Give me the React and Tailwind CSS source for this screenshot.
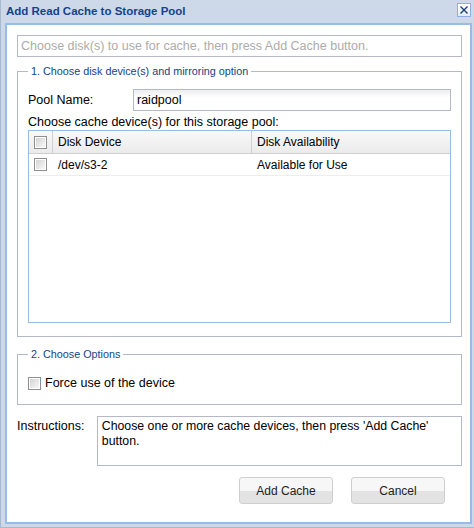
function Check() {
  return (
    <span className="w-[13px] h-[13px] border border-[#8e8f8f] bg-white p-[1px] flex shrink-0">
      <span className="flex-1 bg-linear-to-br from-[#d4d4d4] to-[#f7f7f7]" />
    </span>
  );
}

export default function App() {
  return (
    <div className="w-[474px] h-[528px] flex flex-col bg-[#cdd9e8] border-l border-b border-[#a9b9cd] pl-[4px] pr-[2px] pb-[3px] font-['Liberation_Sans',Arial,sans-serif] text-black">
      <div className="h-[23px] w-full flex items-start justify-between pl-[1px] pr-[1px]">
        <span className="text-[11.5px] font-bold text-[#15428b] leading-[23px]">Add Read Cache to Storage Pool</span>
        <span className="shrink-0 mt-[3px] w-[14px] h-[14px] border border-[#8fb0de] bg-linear-to-b from-[#ffffff] to-[#e3ecf7] flex items-center justify-center">
          <svg width="10" height="10" viewBox="0 0 10 10">
            <path d="M1.5 1.5 L8.5 8.5 M8.5 1.5 L1.5 8.5" stroke="#1c3f7a" strokeWidth="1.4" fill="none" />
          </svg>
        </span>
      </div>
      <div className="flex-1 bg-white border-2 border-[#99bbe8] pl-[10px] pr-[8px] pt-[10px] flex flex-col">
        <div className="h-[22px] border border-[#b5b8c8] px-[3px] flex items-center text-[12.5px] text-[#acacac]">
          Choose disk(s) to use for cache, then press Add Cache button.
        </div>

        <fieldset className="mt-[8px] border border-[#b5b8c8] pl-[10px] pr-[10px] pt-[11px] pb-[13px]">
          <legend className="px-[3px] text-[10.8px] leading-[13px] text-[#15428b]">1. Choose disk device(s) and mirroring option</legend>
          <div className="flex items-center h-[22px]">
            <span className="w-[105px] text-[12.5px]">Pool Name:</span>
            <span className="w-[318px] h-[22px] border border-[#b5b8c8] bg-linear-to-b from-[#eeeeee] to-[#ffffff] to-40% flex items-center px-[3px] text-[12.5px]">raidpool</span>
          </div>
          <div className="mt-[4px] text-[12.5px] leading-[15px]">Choose cache device(s) for this storage pool:</div>
          <div className="h-[193px] border border-[#99bbe8] flex flex-col">
            <div className="h-[23px] flex bg-linear-to-b from-[#f9f9f9] to-[#ebebeb] border-b border-[#d0d0d0] text-[12px]">
              <div className="w-[24px] border-r border-[#d0d0d0] flex items-center justify-center pr-[1px]"><Check /></div>
              <div className="w-[199px] border-r border-[#d0d0d0] flex items-center pl-[5px]">Disk Device</div>
              <div className="flex-1 flex items-center pl-[5px]">Disk Availability</div>
            </div>
            <div className="h-[22px] flex border-b border-[#ededed] text-[12px]">
              <div className="w-[24px] flex items-center justify-center pr-[1px]"><Check /></div>
              <div className="w-[199px] flex items-center pl-[5px]">/dev/s3-2</div>
              <div className="flex-1 flex items-center pl-[5px]">Available for Use</div>
            </div>
          </div>
        </fieldset>

        <fieldset className="mt-[11px] border border-[#b5b8c8] pl-[10px] pr-[10px] pt-[15px] pb-[13px]">
          <legend className="px-[3px] text-[10.8px] leading-[13px] text-[#15428b]">2. Choose Options</legend>
          <div className="flex items-center gap-[4px] h-[15px]">
            <Check />
            <span className="text-[12.5px] leading-[15px]">Force use of the device</span>
          </div>
        </fieldset>

        <div className="mt-[11px] flex items-start">
          <span className="w-[80px] text-[12.5px] leading-[15px] pt-[3px]">Instructions:</span>
          <div className="w-[366px] h-[50px] border border-[#b5b8c8] px-[4px] pt-[2px] text-[12.3px] leading-[15px]">
            Choose one or more cache devices, then press 'Add Cache' button.
          </div>
        </div>

        <div className="mt-[11px] flex justify-end gap-[18px] pr-[17px]">
          <button className="w-[94px] h-[27px] rounded-[3px] border border-[#cfcfcf] bg-linear-to-b from-[#f7f7f7] from-50% to-[#e3e3e3] to-50% text-[12px] text-[#222]">Add Cache</button>
          <button className="w-[94px] h-[27px] rounded-[3px] border border-[#cfcfcf] bg-linear-to-b from-[#f7f7f7] from-50% to-[#e3e3e3] to-50% text-[12px] text-[#222]">Cancel</button>
        </div>
      </div>
    </div>
  );
}
